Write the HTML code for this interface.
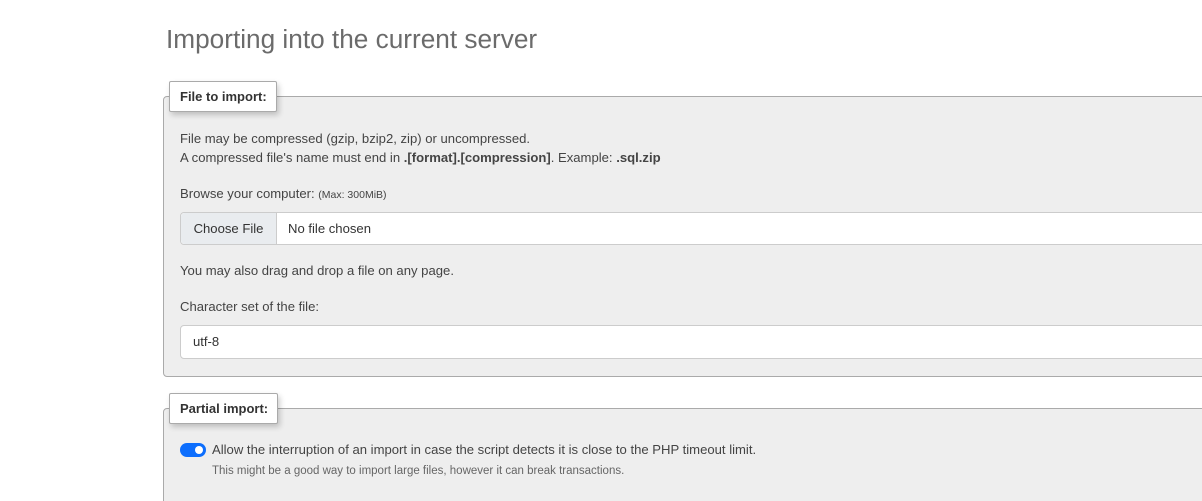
<!DOCTYPE html>
<html style="overflow:hidden"><head><meta charset="utf-8"><style>
html,body{height:501px}
body{margin:0;background:#fff;font-family:"Liberation Sans",Arial,sans-serif;color:#444;width:1202px;overflow:hidden;position:relative;font-size:13.1px}
h2{position:absolute;left:166px;top:24px;margin:0;font-size:26.2px;font-weight:normal;color:#6b6b6b;white-space:nowrap}
.fs{position:absolute;left:163px;width:1060px;background:#eee;border:1px solid #aaa;border-radius:4px}
.lg{position:absolute;left:169px;height:31px;background:#fff;border:1px solid #aaa;border-radius:2px;box-shadow:2px 3px 6px rgba(0,0,0,.2);font-weight:bold;font-size:13px;line-height:30px;padding:0 10px;box-sizing:border-box;color:#333;white-space:nowrap}
.t{position:absolute;left:180px;white-space:nowrap}
.box{position:absolute;left:180px;width:1040px;background:#fff;border:1px solid #ccc;border-radius:4px;box-sizing:border-box}
</style></head><body>
<h2>Importing into the current server</h2>
<div class="fs" style="top:96px;height:279px"></div>
<div class="lg" style="top:81px;width:108px">File to import:</div>
<div class="t" style="top:131px">File may be compressed (gzip, bzip2, zip) or uncompressed.</div>
<div class="t" style="top:150px">A compressed file's name must end in <b>.[format].[compression]</b>. Example: <b>.sql.zip</b></div>
<div class="t" style="top:186px">Browse your computer: <span style="font-size:10.5px">(Max: 300MiB)</span></div>
<div class="box" style="top:212px;height:33px">
<div style="position:absolute;left:0;top:0;width:95px;height:31px;background:#e9ecef;border-right:1px solid #ccc;border-radius:4px 0 0 4px;line-height:31px;text-align:center;color:#333">Choose File</div>
<div style="position:absolute;left:107px;top:0;line-height:31px;color:#333">No file chosen</div></div>
<div class="t" style="top:263px">You may also drag and drop a file on any page.</div>
<div class="t" style="top:299px">Character set of the file:</div>
<div class="box" style="top:325px;height:34px"><div style="position:absolute;left:12px;line-height:32px;color:#333">utf-8</div></div>
<div class="fs" style="top:408px;height:100px"></div>
<div class="lg" style="top:393px;width:109px">Partial import:</div>
<div style="position:absolute;left:180px;top:443px;width:26px;height:14px;border-radius:7px;background:#0d6efd"><div style="position:absolute;right:3px;top:3px;width:8px;height:8px;border-radius:50%;background:#fff"></div></div>
<div class="t" style="top:442px;left:212px">Allow the interruption of an import in case the script detects it is close to the PHP timeout limit.</div>
<div class="t" style="top:465px;left:212px;font-size:11.5px;color:#666">This might be a good way to import large files, however it can break transactions.</div>
</body></html>
